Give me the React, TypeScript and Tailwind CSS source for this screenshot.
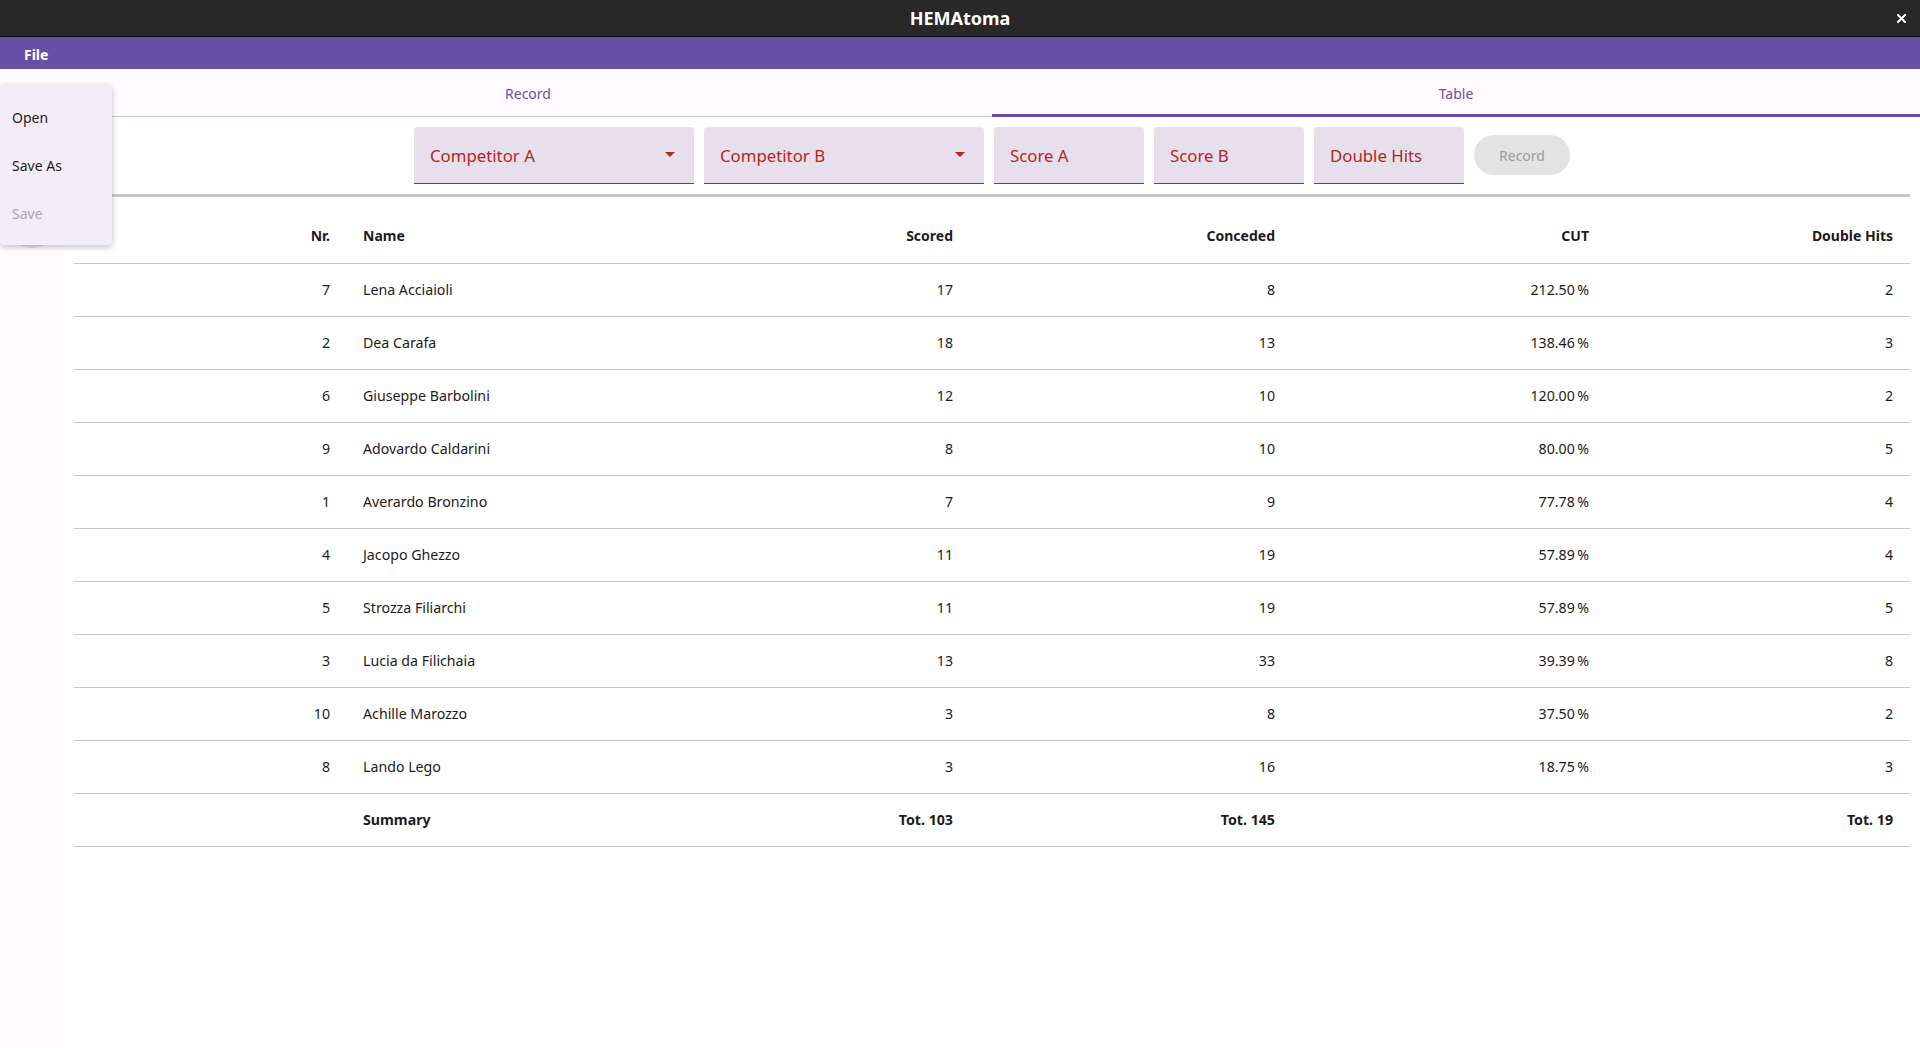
import React from "react";

const rows: [string, string, string, string, string, string][] = [
  ["7", "Lena Acciaioli", "17", "8", "212.50\u202F%", "2"],
  ["2", "Dea Carafa", "18", "13", "138.46\u202F%", "3"],
  ["6", "Giuseppe Barbolini", "12", "10", "120.00\u202F%", "2"],
  ["9", "Adovardo Caldarini", "8", "10", "80.00\u202F%", "5"],
  ["1", "Averardo Bronzino", "7", "9", "77.78\u202F%", "4"],
  ["4", "Jacopo Ghezzo", "11", "19", "57.89\u202F%", "4"],
  ["5", "Strozza Filiarchi", "11", "19", "57.89\u202F%", "5"],
  ["3", "Lucia da Filichaia", "13", "33", "39.39\u202F%", "8"],
  ["10", "Achille Marozzo", "3", "8", "37.50\u202F%", "2"],
  ["8", "Lando Lego", "3", "16", "18.75\u202F%", "3"],
];

function Arrow() {
  return (
    <svg width="10" height="5" viewBox="0 0 10 5" className="shrink-0 mb-[2px]">
      <path d="M0 0 L10 0 L5 5 Z" fill="#b3261e" />
    </svg>
  );
}

function Field({ label, w, dropdown }: { label: string; w: string; dropdown?: boolean }) {
  return (
    <div
      className={`${w} h-[57px] bg-[#e7e0ec] rounded-t-[4px] border-b border-[#b3261e] flex items-center pl-[16px] pr-[19px] justify-between`}
    >
      <span className="text-[16.8px] text-[#b3261e] leading-none pt-[3px]">{label}</span>
      {dropdown && <Arrow />}
    </div>
  );
}

function Row({ cells, bold }: { cells: string[]; bold?: boolean }) {
  const cls = bold ? "font-bold text-[#1d1b20]" : "text-[#1d1b20]";
  return (
    <div
      className={`grid grid-cols-[256px_370px_253px_322px_314px_304px_17px] h-[53px] items-center border-b border-[#cac4d0] text-[14.2px] ${cls}`}
    >
      <div className="text-right">{cells[0]}</div>
      <div className="pl-[33px]">{cells[1]}</div>
      <div className="text-right">{cells[2]}</div>
      <div className="text-right">{cells[3]}</div>
      <div className="text-right">{cells[4]}</div>
      <div className="text-right">{cells[5]}</div>
      <div />
    </div>
  );
}

export default function App() {
  return (
    <div className="relative w-full h-[1048px] flex flex-col overflow-hidden font-['Noto_Sans',sans-serif]">
      {/* Title bar */}
      <div className="relative h-[37px] shrink-0 bg-[#282828] border-b border-black flex items-center justify-center">
        <span className="text-white font-bold text-[18px] leading-none">HEMAtoma</span>
        <svg
          className="absolute right-[14px] top-[14px]"
          width="9"
          height="9"
          viewBox="0 0 9 9"
        >
          <path d="M1 1 L8 8 M8 1 L1 8" stroke="white" strokeWidth="2" strokeLinecap="square" />
        </svg>
      </div>
      {/* Menu bar */}
      <div className="h-[32px] shrink-0 bg-[#6750a4] flex items-center pl-[24px] pt-[3px]">
        <span className="text-white font-bold text-[14px]">File</span>
      </div>
      {/* Body */}
      <div className="flex flex-1 min-h-0">
        <div className="relative w-[64px] shrink-0 bg-[#fffbfe]">
          <div className="absolute left-[4px] top-[123px] w-[56px] h-[56px] rounded-full bg-[#e8def8]" />
        </div>
        <div className="flex-1 bg-white flex flex-col">
          {/* Tabs */}
          <div className="h-[48px] shrink-0 bg-[#fffbfe] flex border-b border-[#cac4d0]">
            <div className="flex-1 flex items-center justify-center text-[14px] text-[#6750a4] pt-[2px]">
              Record
            </div>
            <div className="relative flex-1 flex items-center justify-center text-[14px] text-[#6750a4] pt-[2px]">
              Table
              <div className="absolute left-0 right-0 bottom-[-1px] h-[3px] bg-[#6750a4]" />
            </div>
          </div>
          {/* Form */}
          <div className="mt-[10px] flex justify-center gap-[10px] items-center">
            <Field label="Competitor A" w="w-[280px]" dropdown />
            <Field label="Competitor B" w="w-[280px]" dropdown />
            <Field label="Score A" w="w-[150px]" />
            <Field label="Score B" w="w-[150px]" />
            <Field label="Double Hits" w="w-[150px]" />
            <div className="w-[96px] h-[40px] rounded-full bg-[#e3e3e4] flex items-center justify-center text-[14px] text-[#9c9a9e] mb-[1px] pt-[1px]">
              Record
            </div>
          </div>
          <div className="mt-[10px] mx-[10px] h-[3px] bg-[#cac4d0]" />
          {/* Table */}
          <div className="mt-[11px] mx-[10px]">
            <div className="grid grid-cols-[256px_370px_253px_322px_314px_304px_17px] h-[56px] items-center border-b border-[#cac4d0] text-[14px] font-bold text-[#1d1b20]">
              <div className="text-right">Nr.</div>
              <div className="pl-[33px]">Name</div>
              <div className="text-right">Scored</div>
              <div className="text-right">Conceded</div>
              <div className="text-right">CUT</div>
              <div className="text-right">Double Hits</div>
              <div />
            </div>
            {rows.map((r) => (
              <Row key={r[0]} cells={r} />
            ))}
            <Row cells={["", "Summary", "Tot. 103", "Tot. 145", "", "Tot. 19"]} bold />
          </div>
        </div>
      </div>
      {/* File menu popup */}
      <div className="absolute left-0 top-[85px] w-[112px] h-[160px] bg-[#f3edf7] rounded-[4px] shadow-[0_2px_6px_rgba(0,0,0,0.25)] py-[8px] flex flex-col">
        <div className="h-[48px] flex items-center pl-[12px] text-[14px] text-[#1d1b20]">Open</div>
        <div className="h-[48px] flex items-center pl-[12px] text-[14px] text-[#1d1b20]">Save As</div>
        <div className="h-[48px] flex items-center pl-[12px] text-[14px] text-[#a9a6ab]">Save</div>
      </div>
    </div>
  );
}
